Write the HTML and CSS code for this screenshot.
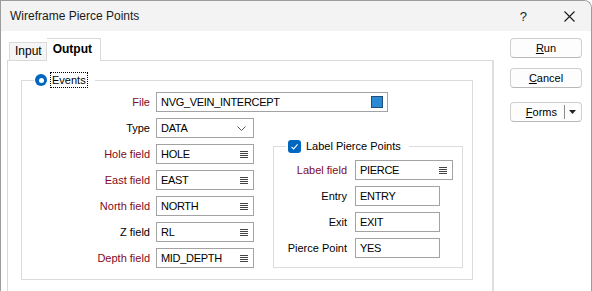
FILE: index.html
```html
<!DOCTYPE html>
<html lang="en">
<head>
    <meta charset="UTF-8">
    <title>Wireframe Pierce Points</title>
    <link rel="stylesheet" href="styles.css">
</head>
<body>
<div class="window">
    <div class="titlebar">
        <span class="title">Wireframe Pierce Points</span>
        <span class="help">?</span>
        <svg class="close" width="11" height="11" viewBox="0 0 11 11"><path d="M0.5 0.5L10.5 10.5M10.5 0.5L0.5 10.5" stroke="#1a1a1a" stroke-width="1.1"/></svg>
    </div>
    <div class="content">
        <div class="main">
            <div class="tabs">
                <div class="tab">Input</div>
                <div class="tab active">Output</div>
            </div>
            <div class="panel">
                <div class="group events">
                    <div class="legend events_legend">
                        <span class="radio"><span class="radio_dot"></span></span>
                        <span class="focus">Events</span>
                    </div>
                    <div class="row">
                        <span class="lbl req">File</span>
                        <div class="input wide">NVG_VEIN_INTERCEPT<span class="swatch"></span></div>
                    </div>
                    <div class="row">
                        <span class="lbl">Type</span>
                        <div class="input">DATA<svg class="chevron" width="9" height="5" viewBox="0 0 9 5"><path d="M0.5 0.5L4.5 4.5L8.5 0.5" stroke="#555" fill="none"/></svg></div>
                    </div>
                    <div class="split">
                        <div class="col">
                            <div class="row">
                                <span class="lbl req">Hole field</span>
                                <div class="input">HOLE<svg class="list" width="8" height="7" viewBox="0 0 8 7"><path d="M0 .5h8M0 2.5h8M0 4.5h8M0 6.5h8" stroke="#444"/></svg></div>
                            </div>
                            <div class="row">
                                <span class="lbl req">East field</span>
                                <div class="input">EAST<svg class="list" width="8" height="7" viewBox="0 0 8 7"><path d="M0 .5h8M0 2.5h8M0 4.5h8M0 6.5h8" stroke="#444"/></svg></div>
                            </div>
                            <div class="row">
                                <span class="lbl req">North field</span>
                                <div class="input">NORTH<svg class="list" width="8" height="7" viewBox="0 0 8 7"><path d="M0 .5h8M0 2.5h8M0 4.5h8M0 6.5h8" stroke="#444"/></svg></div>
                            </div>
                            <div class="row">
                                <span class="lbl">Z field</span>
                                <div class="input">RL<svg class="list" width="8" height="7" viewBox="0 0 8 7"><path d="M0 .5h8M0 2.5h8M0 4.5h8M0 6.5h8" stroke="#444"/></svg></div>
                            </div>
                            <div class="row">
                                <span class="lbl req">Depth field</span>
                                <div class="input">MID_DEPTH<svg class="list" width="8" height="7" viewBox="0 0 8 7"><path d="M0 .5h8M0 2.5h8M0 4.5h8M0 6.5h8" stroke="#444"/></svg></div>
                            </div>
                        </div>
                        <div class="group labels">
                            <div class="legend labels_legend">
                                <span class="check"><svg width="13" height="13" viewBox="0 0 13 13"><path d="M3.5 6.8L5.6 8.9L9.6 4.4" stroke="#fff" stroke-width="1.1" fill="none"/></svg></span>
                                <span>Label Pierce Points</span>
                            </div>
                            <div class="row">
                                <span class="lbl lbl_small req">Label field</span>
                                <div class="input">PIERCE<svg class="list" width="8" height="7" viewBox="0 0 8 7"><path d="M0 .5h8M0 2.5h8M0 4.5h8M0 6.5h8" stroke="#444"/></svg></div>
                            </div>
                            <div class="row">
                                <span class="lbl lbl_small">Entry</span>
                                <div class="input short">ENTRY</div>
                            </div>
                            <div class="row">
                                <span class="lbl lbl_small">Exit</span>
                                <div class="input short">EXIT</div>
                            </div>
                            <div class="row">
                                <span class="lbl lbl_small">Pierce Point</span>
                                <div class="input short">YES</div>
                            </div>
                        </div>
                    </div>
                </div>
            </div>
        </div>
        <div class="side">
            <div class="button"><span class="key">R</span>un</div>
            <div class="button"><span class="key">C</span>ancel</div>
            <div class="button forms">
                <span class="forms_text"><span class="key">F</span>orms</span>
                <span class="divider"></span>
                <svg width="7" height="4" viewBox="0 0 7 4"><path d="M0 0H7L3.5 4Z" fill="#222"/></svg>
            </div>
        </div>
    </div>
</div>
</body>
</html>
```

FILE: styles.css
```css
* {
    box-sizing: border-box;
}

body {
    margin: 0;
    font-family: "Liberation Sans", Arial, sans-serif;
    font-size: 11px;
    color: #000;
    background: #fff;
}

.window {
    width: 592px;
    height: 291px;
    border: 1px solid #9c9c9c;
    border-bottom: none;
    border-top-right-radius: 8px;
    overflow: hidden;
    background: #fff;
}

.titlebar {
    height: 30px;
    display: flex;
    align-items: center;
    background: #f3f3f3;
    color: #1a1a1a;
}

.title {
    margin-left: 9px;
    font-size: 12px;
    flex: 1;
}

.help {
    font-size: 13px;
    margin-right: 37px;
}

.close {
    margin-right: 16px;
}

.content {
    display: flex;
}

.main {
    margin-left: 6px;
    width: 487px;
}

.tabs {
    display: flex;
    align-items: flex-end;
    height: 29px;
    padding-left: 2px;
}

.tab {
    height: 18px;
    padding: 0 4px 0 5px;
    border: 1px solid #d9d9d9;
    border-bottom: none;
    background: #f5f5f5;
    font-size: 12px;
    line-height: 17px;
}

.tab.active {
    height: 23px;
    margin-bottom: -1px;
    padding: 0 8px 0 6px;
    background: #fff;
    font-weight: bold;
    line-height: 20px;
    border-left: none;
    position: relative;
}

.panel {
    height: 240px;
    border: 1px solid #d9d9d9;
    border-right: 2px solid #dedede;
    padding: 19px 19px 0 13px;
}

.group {
    position: relative;
    border: 1px solid #dcdcdc;
}

.events {
    height: 200px;
    padding-top: 11px;
}

.legend {
    position: absolute;
    display: flex;
    align-items: center;
    background: #fff;
}

.events_legend {
    top: -9px;
    left: 12px;
    height: 16px;
    padding: 0 7px 0 1px;
    gap: 3px;
}

.radio {
    width: 12px;
    height: 12px;
    border-radius: 50%;
    background: #0067c0;
    display: flex;
    align-items: center;
    justify-content: center;
}

.radio_dot {
    width: 5px;
    height: 5px;
    border-radius: 50%;
    background: #fff;
}

.focus {
    border: 1px dotted #000;
    padding: 0 1px;
    line-height: 14px;
}

.row {
    display: flex;
    align-items: center;
    height: 20px;
    margin-bottom: 6px;
}

.lbl {
    width: 128px;
    margin-right: 6px;
    text-align: right;
}

.lbl_small {
    width: 73px;
    margin-right: 8px;
}

.req {
    color: #7f0a22;
}

.input {
    width: 98px;
    height: 20px;
    border: 1px solid #a3a3a3;
    padding: 0 5px 0 4px;
    display: flex;
    align-items: center;
    justify-content: space-between;
    letter-spacing: -0.3px;
    white-space: nowrap;
}

.input.wide {
    width: 232px;
    padding-right: 4px;
}

.input.short {
    width: 85px;
}

.swatch {
    width: 12px;
    height: 12px;
    background: #2d89d3;
    border: 1px solid #1f4f7a;
}

.chevron {
    margin-right: 2px;
}

.split {
    display: flex;
    align-items: flex-start;
}

.labels {
    margin: 2px 0 0 19px;
    width: 190px;
    padding: 13px 0 3px 0;
}

.labels_legend {
    top: -9px;
    left: 12px;
    height: 16px;
    padding: 0 8px 0 2px;
    gap: 5px;
}

.check {
    width: 13px;
    height: 13px;
    border-radius: 3px;
    background: #0067c0;
    display: flex;
}

.side {
    margin-left: 16px;
    padding-top: 7px;
    display: flex;
    flex-direction: column;
}

.button {
    width: 72px;
    height: 20px;
    border: 1px solid #cfcfcf;
    border-bottom-color: #b8b8b8;
    border-radius: 4px;
    background: #fdfdfd;
    display: flex;
    align-items: center;
    justify-content: center;
    margin-bottom: 10px;
}

.button.forms {
    margin-top: 4px;
    justify-content: flex-end;
    padding-right: 5px;
}

.forms_text {
    margin-right: 7px;
}

.divider {
    width: 1px;
    height: 14px;
    background: #8a8a8a;
    margin-right: 4px;
}

.key {
    text-decoration: underline;
}
```
